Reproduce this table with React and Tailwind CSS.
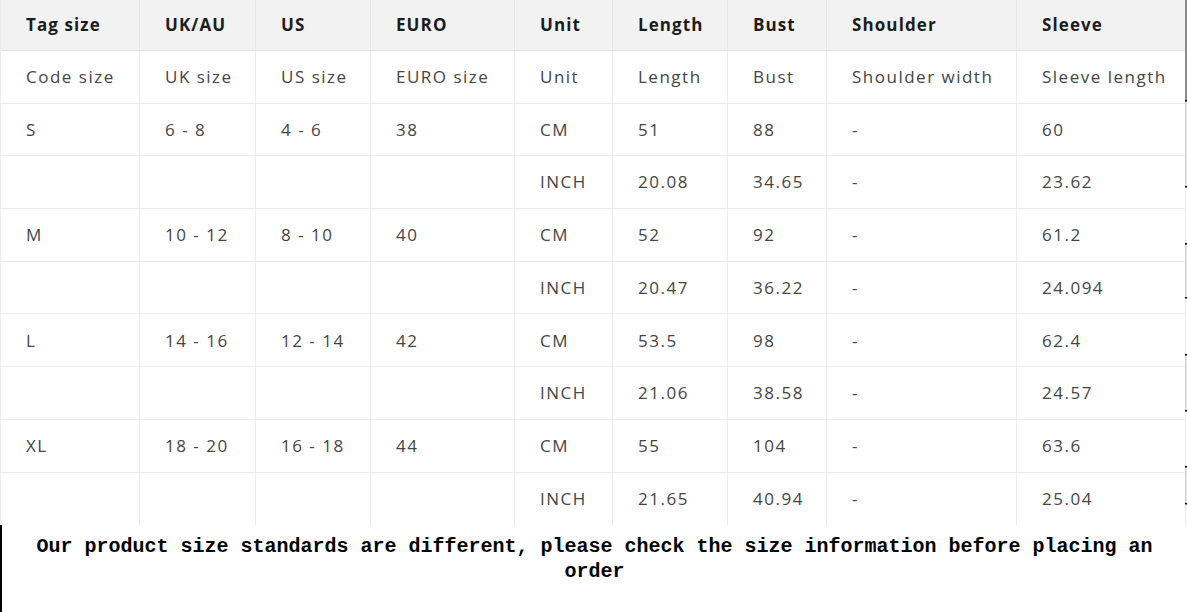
import React from "react";

const cols = ["139px", "116px", "115px", "144px", "98px", "115px", "99px", "190px", "169px"];

const header = ["Tag size", "UK/AU", "US", "EURO", "Unit", "Length", "Bust", "Shoulder", "Sleeve"];
const rows = [
  ["Code size", "UK size", "US size", "EURO size", "Unit", "Length", "Bust", "Shoulder width", "Sleeve length"],
  ["S", "6 - 8", "4 - 6", "38", "CM", "51", "88", "-", "60"],
  ["", "", "", "", "INCH", "20.08", "34.65", "-", "23.62"],
  ["M", "10 - 12", "8 - 10", "40", "CM", "52", "92", "-", "61.2"],
  ["", "", "", "", "INCH", "20.47", "36.22", "-", "24.094"],
  ["L", "14 - 16", "12 - 14", "42", "CM", "53.5", "98", "-", "62.4"],
  ["", "", "", "", "INCH", "21.06", "38.58", "-", "24.57"],
  ["XL", "18 - 20", "16 - 18", "44", "CM", "55", "104", "-", "63.6"],
  ["", "", "", "", "INCH", "21.65", "40.94", "-", "25.04"],
];

export default function App() {
  return (
    <div className="relative w-[1187px] h-[612px] bg-white overflow-hidden">
      <div className="flex">
        <div
          className="grid w-[1185px] border-l border-[#ececec]"
          style={{ gridTemplateColumns: cols.join(" ") }}
        >
          {header.map((h, i) => (
            <div
              key={"h" + i}
              className="h-[51px] flex items-center pl-[25px] bg-[#f2f2f2] border-r border-b border-[#e3e3e3] text-[17px] tracking-[1.1px] font-bold text-[#1c1c1c] whitespace-nowrap"
              style={{ fontFamily: '"Open Sans", "Noto Sans", sans-serif' }}
            >
              {h}
            </div>
          ))}
          {rows.map((r, ri) =>
            r.map((c, ci) => (
              <div
                key={ri + "-" + ci}
                className={
                  "h-[52.7px] flex items-center pl-[25px] border-r border-[#ececec] text-[17px] tracking-[1.5px] text-[#454545] whitespace-nowrap " +
                  (ri < rows.length - 1 ? "border-b" : "")
                }
                style={{ fontFamily: '"Open Sans", "Noto Sans", sans-serif' }}
              >
                {c}
              </div>
            ))
          )}
        </div>
        <div className="w-[2px] flex flex-col">
          <div className="h-[100px] bg-[#8a8a8a]" />
        </div>
      </div>
      <div className="border-l-2 border-black h-[87px] px-4 pt-[9px]">
        <p
          className="text-center text-[20px] leading-[25px] font-bold text-black"
          style={{ fontFamily: '"Liberation Mono", "DejaVu Sans Mono", monospace' }}
        >
          Our product size standards are different, please check the size information before placing an order
        </p>
      </div>
      <svg className="absolute top-0 left-[1183px]" width="4" height="612">
        {[
          [100, 186],
          [243, 297],
          [354, 410],
          [466, 503],
        ].map(([a, b], i) => (
          <g key={i}>
            <rect x="2" y={a} width="1.5" height={b - a} fill="#d0d0d0" />
            <rect x="2" y={a} width="2" height="1.5" fill="#000" />
            <rect x="2" y={b} width="2" height="1.5" fill="#000" />
          </g>
        ))}
      </svg>
    </div>
  );
}
